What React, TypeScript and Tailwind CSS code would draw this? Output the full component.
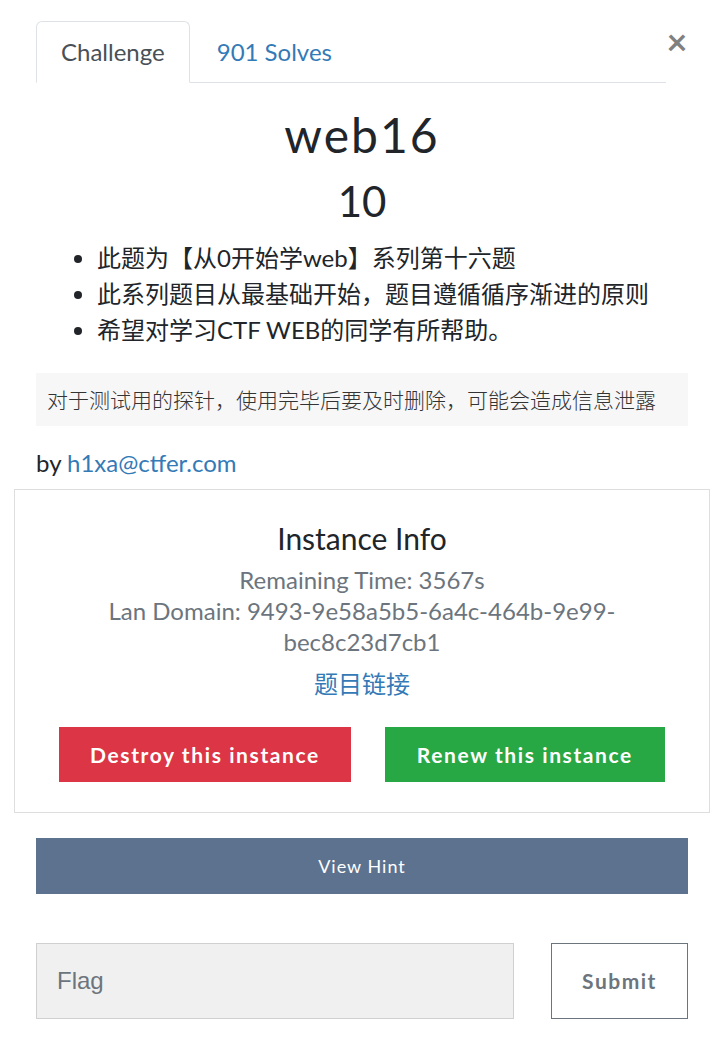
import React from "react";

const sans = { fontFamily: "Lato, 'Noto Sans CJK SC', sans-serif" };

export default function App() {
  return (
    <div className="min-h-[1051px] bg-white text-[#212529]" style={sans}>
      <div className="px-[36px] pt-[21px] w-[724px]">
        {/* tabs */}
        <div className="flex items-start">
          <ul className="flex flex-1 border-b border-[#dee2e6]">
            <li className="-mb-px">
              <div className="px-[24px] py-[12px] text-[24px] leading-[36px] text-[#495057] bg-white border border-[#dee2e6] border-b-white rounded-t-[6px]">
                Challenge
              </div>
            </li>
            <li className="-mb-px">
              <div className="px-[26px] py-[12px] text-[24px] leading-[36px] text-[#337ab7] border border-transparent">
                901 Solves
              </div>
            </li>
          </ul>
          <button className="w-[22px] mt-[5px] text-[36px] leading-[30px] font-bold text-[#808080] flex justify-center">
            ×
          </button>
        </div>

        {/* title */}
        <h2 className="mt-[23px] text-center text-[48px] leading-[58px] tracking-[2px]">web16</h2>
        <h3 className="mt-[12px] text-center text-[42px] leading-[50px]">10</h3>

        <ul className="mt-[14px] pl-[61px] list-disc text-[24px] leading-[36px]">
          <li>此题为【从0开始学web】系列第十六题</li>
          <li>此系列题目从最基础开始，题目遵循循序渐进的原则</li>
          <li>希望对学习CTF WEB的同学有所帮助。</li>
        </ul>

        <div
          className="mt-[25px] h-[53px] flex items-center px-[11px] bg-[#f7f7f7] text-[21px] text-[#333] font-light"
          style={{ fontFamily: "'Noto Sans CJK SC', sans-serif" }}
        >
          对于测试用的探针，使用完毕后要及时删除，可能会造成信息泄露
        </div>

        <p className="mt-[19px] text-[24px] leading-[36px]">
          by <span className="text-[#337ab7]">h1xa@ctfer.com</span>
        </p>

        {/* instance box */}
        <div className="mt-[8px] -ml-[22px] w-[696px] border border-[#dedede] pt-[30px] pb-[30px] px-[36px] text-center">
          <h4 className="text-[30px] leading-[36px]">Instance Info</h4>
          <div className="mt-[8px] text-[24px] leading-[31px] text-[#6c757d]">
            <p>Remaining Time: 3567s</p>
            <p className="px-[20px]">Lan Domain: 9493-9e58a5b5-6a4c-464b-9e99-bec8c23d7cb1</p>
          </div>
          <p className="mt-[9px] text-[24px] leading-[36px] text-[#337ab7]">题目链接</p>
          <div className="mt-[25px] flex justify-center gap-[34px]">
            <button className="h-[55px] px-[31px] bg-[#dc3545] text-white text-[21px] font-bold tracking-[1.6px]">
              Destroy this instance
            </button>
            <button className="h-[55px] px-[32px] bg-[#28a745] text-white text-[21px] font-bold tracking-[1.6px]">
              Renew this instance
            </button>
          </div>
        </div>

        <button className="mt-[25px] w-[652px] h-[56px] bg-[#5c728f] text-white text-[18px] tracking-[1px]">
          View Hint
        </button>

        <div className="mt-[49px] flex gap-[37px] w-[652px]">
          <div
            className="w-[478px] h-[76px] bg-[#f0f0f0] border border-[#d0d0d0] flex items-center pl-[20px] text-[24px] text-[#6c757d]"
            style={{ fontFamily: "'Liberation Sans', Arial, sans-serif" }}
          >
            Flag
          </div>
          <button className="w-[137px] h-[76px] border border-[#6c757d] text-[#6c757d] text-[21px] font-bold tracking-[1.5px]">
            Submit
          </button>
        </div>
      </div>
    </div>
  );
}
